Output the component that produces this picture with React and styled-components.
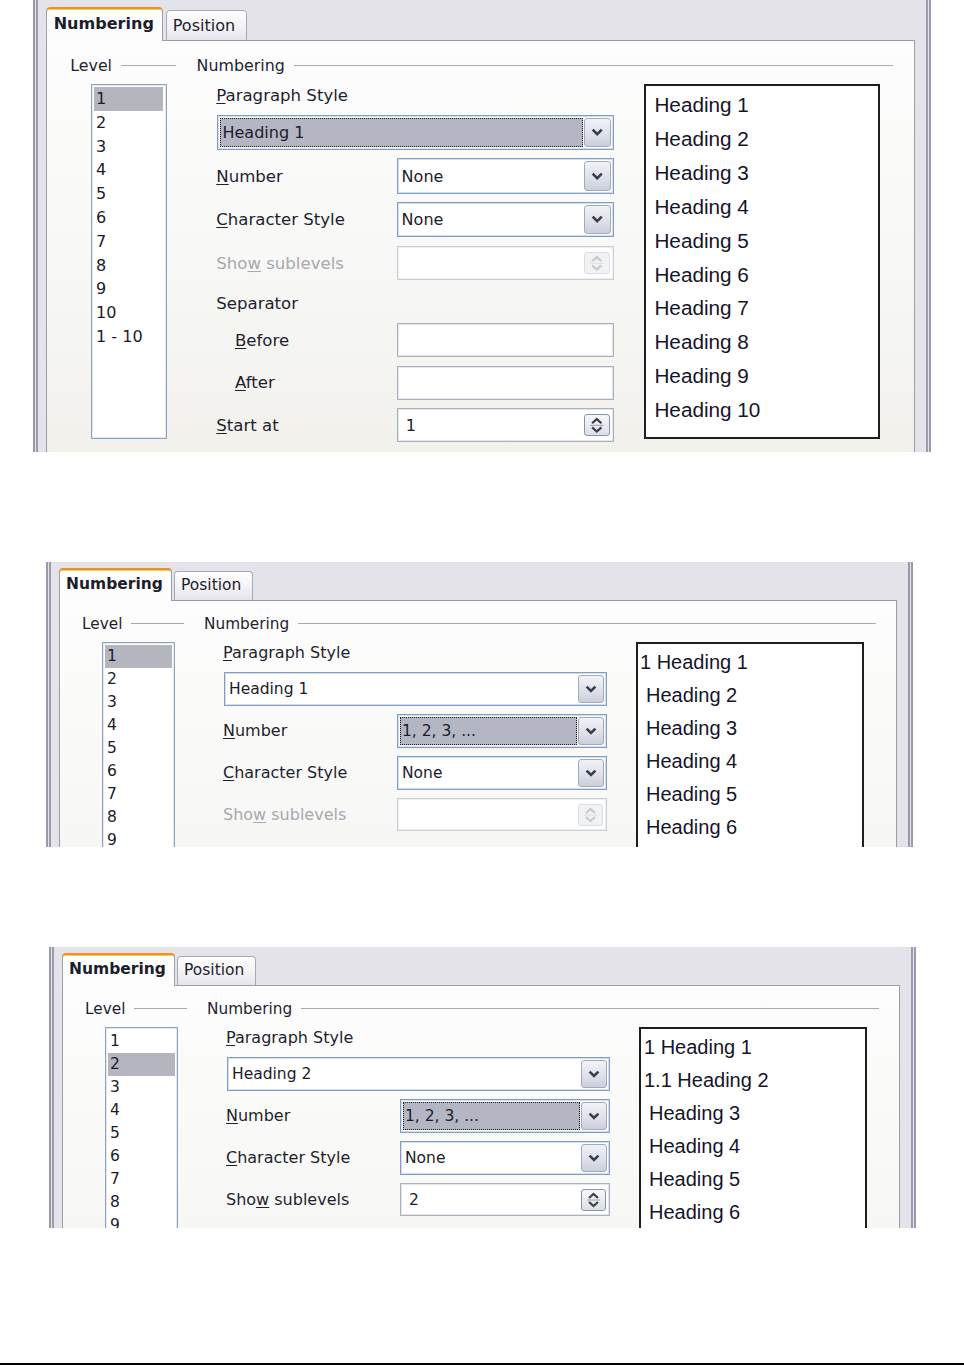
import React from 'react';
import styled, { createGlobalStyle } from 'styled-components';

const GlobalStyle = createGlobalStyle`
  html, body {
    margin: 0;
    padding: 0;
    background: #fff;
  }
  body {
    width: 964px;
    height: 1366px;
    overflow: hidden;
    font-family: "DejaVu Sans", "Liberation Sans", sans-serif;
  }
`;

const Sheet = styled.div`
  width: 964px;
  height: 1366px;
  display: flex;
  flex-direction: column;
`;

const Window = styled.div`
  flex: none;
  zoom: ${p => p.$zoom || 1};
  margin-left: ${p => p.$left}px;
  margin-top: ${p => p.$top}px;
  width: 867px;
  height: ${p => p.$height}px;
  box-sizing: border-box;
  border-left: 5px double #9a9aac;
  border-right: 5px double #9a9aac;
  background: #e3e3e9;
  padding: ${p => p.$padTop}px 0 0 8px;
  overflow: hidden;
`;

const TabStrip = styled.div`
  position: relative;
  z-index: 1;
  display: flex;
  align-items: flex-end;
  gap: 2px;
  height: 32px;
`;

const Tab = styled.div`
  box-sizing: border-box;
  width: ${p => p.$width}px;
  height: ${p => (p.$active ? 33 : 29)}px;
  margin-bottom: ${p => (p.$active ? -1 : 0)}px;
  padding: 0 0 ${p => (p.$active ? 3 : 1)}px 6px;
  display: flex;
  align-items: center;
  border: 1px solid ${p => (p.$active ? '#9aa2a6' : '#a3abba')};
  border-bottom: none;
  border-top: ${p => (p.$active ? '2px solid #e8912f' : '1px solid #a3abba')};
  border-radius: 4px 4px 0 0;
  box-shadow: ${p => (p.$active ? 'inset 0 1px 0 #ffc84a' : 'inset 0 1px 0 #fff')};
  background: ${p =>
    p.$active
      ? 'linear-gradient(#ffffff, #fcfcfc)'
      : 'linear-gradient(#fefefe, #f1f1f5 60%, #e4e4ec)'};
  font-size: 15.5px;
  font-weight: ${p => (p.$active ? 'bold' : 'normal')};
  color: #1d1d2c;
  white-space: nowrap;
`;

const TabPage = styled.div`
  width: 838px;
  min-height: 520px;
  box-sizing: border-box;
  border: 1px solid #979fa3;
  background: linear-gradient(#fdfdfd, #f8f8f6 200px, #f1f0eb 420px);
  padding-top: 13px;
`;

const LegendRow = styled.div`
  display: flex;
  align-items: center;
  height: 20px;
  padding: 0 20px 0 22px;
`;

const Legend = styled.div`
  display: flex;
  align-items: center;
  flex: ${p => (p.$grow ? 1 : 'none')};
  width: ${p => (p.$grow ? 'auto' : `${p.$width}px`)};
  margin-left: ${p => p.$gap || 0}px;
  font-size: 15.3px;
  color: #1f1f30;

  &::after {
    content: '';
    flex: 1;
    height: 1px;
    margin-left: 9px;
    background: #a9a9ad;
  }
`;

const Body = styled.div`
  display: flex;
  align-items: flex-start;
  margin-top: 8px;
  padding-left: 42px;
`;

const LevelList = styled.div`
  flex: none;
  width: 73px;
  height: 343px;
  box-sizing: border-box;
  border: 1px solid #8ea2bd;
  box-shadow: inset 0 0 0 1px #e4e9f0;
  background: #fff;
  padding: 2px;
`;

const LevelItem = styled.div`
  height: 23px;
  line-height: 23px;
  padding-left: 2px;
  font-size: 15.5px;
  color: #1c1c2a;
  background: ${p => (p.$selected ? '#b5b5c0' : 'transparent')};
`;

const Form = styled.div`
  flex: none;
  width: 384px;
  margin-left: 48px;
  display: flex;
  flex-direction: column;
  gap: 8px;
`;

const LabelLine = styled.div`
  height: 22px;
  margin-top: ${p => p.$lift || 0}px;
  display: flex;
  align-items: center;
`;

const Row = styled.div`
  display: grid;
  grid-template-columns: 174px 210px;
  align-items: center;
  height: ${p => p.$h || 34}px;
`;

const Label = styled.span`
  font-size: 16px;
  color: ${p => (p.$disabled ? '#a9a8ae' : '#1f1f2f')};
  padding-left: ${p => p.$indent || 0}px;
  white-space: nowrap;
`;

const Key = styled.span`
  text-decoration: underline;
  text-underline-offset: 2px;
`;

const tones = {
  blue: ['#819ec6', '#d4deeb'],
  grey: ['#a9b1bb', '#e3e6ea'],
  dim: ['#cbced3', '#eeeff1'],
};

const Field = styled.div`
  box-sizing: border-box;
  height: ${p => p.$h || 34}px;
  margin-left: ${p => p.$shift || 0}px;
  display: flex;
  align-items: stretch;
  border: 1px solid ${p => tones[p.$tone][0]};
  box-shadow: inset 0 0 0 1px ${p => tones[p.$tone][1]};
  background: #fff;
  padding: 2px;
`;

const FieldText = styled.div`
  flex: 1;
  min-width: 0;
  display: flex;
  align-items: center;
  box-sizing: border-box;
  margin-right: 1px;
  padding-left: ${p => (p.$focused ? 1 : p.$pad || 1)}px;
  font-size: 15.5px;
  color: #1c1c2a;
  white-space: nowrap;
  background: ${p => (p.$focused ? '#b4b6c3' : 'transparent')};
  border: 1px ${p => (p.$focused ? 'dotted #1a1a1a' : 'solid transparent')};
`;

const DropButton = styled.div`
  flex: none;
  width: 26px;
  box-sizing: border-box;
  display: flex;
  align-items: center;
  justify-content: center;
  border: 1px solid #a0a9c0;
  border-radius: 3px;
  background: linear-gradient(#f1f2f7, #dfe1ea 55%, #cbcfdc);
`;

const SpinButton = styled.div`
  flex: none;
  align-self: center;
  width: 25px;
  height: 22px;
  margin-right: 1px;
  box-sizing: border-box;
  display: flex;
  align-items: center;
  justify-content: center;
  border: 1px solid ${p => (p.$disabled ? '#dcdde2' : '#8892a8')};
  border-radius: 3px;
  background: ${p =>
    p.$disabled ? '#f1f2f3' : 'linear-gradient(#f7f8fb, #dcdfe8)'};
`;

const Preview = styled.div`
  flex: none;
  width: 228px;
  height: 343px;
  margin-left: 29px;
  box-sizing: border-box;
  border: 2px solid #1e1e1e;
  background: #fff;
  padding-top: 2px;
`;

const PreviewLine = styled.div`
  height: ${p => p.$lh}px;
  line-height: ${p => p.$lh}px;
  padding-left: ${p => p.$indent}px;
  font-family: "Liberation Sans", Arial, sans-serif;
  font-size: 20px;
  color: #15152a;
  white-space: nowrap;
`;

const Rule = styled.div`
  flex: none;
  margin-top: 135px;
  height: 2px;
  background: #000;
`;

const Chevron = () => (
  <svg width="12" height="8" viewBox="0 0 12 8">
    <polyline points="1.6,1.6 6,6 10.4,1.6" fill="none" stroke="#3a3d4a" strokeWidth="2.6" />
  </svg>
);

const Arrows = ({ disabled }) => {
  const c = disabled ? '#c9cacf' : '#3d404c';
  return (
    <svg width="15" height="18" viewBox="0 0 15 18">
      <polyline points="3,7 7.5,3 12,7" fill="none" stroke={c} strokeWidth="2.2" />
      <line x1="1" y1="9" x2="14" y2="9" stroke={disabled ? '#e0e0e4' : '#9aa2b4'} strokeWidth="1" />
      <polyline points="3,11 7.5,15 12,11" fill="none" stroke={c} strokeWidth="2.2" />
    </svg>
  );
};

const Combo = ({ value, focused, wide }) => (
  <Field $tone="blue" $shift={wide ? 1 : 0}>
    <FieldText $focused={focused}>{value}</FieldText>
    <DropButton>
      <Chevron />
    </DropButton>
  </Field>
);

const Spin = ({ value, disabled }) => (
  <Field $tone={disabled ? 'dim' : 'grey'} $h={33}>
    <FieldText $pad={5}>{value}</FieldText>
    <SpinButton $disabled={disabled}>
      <Arrows disabled={disabled} />
    </SpinButton>
  </Field>
);

const TextBox = () => (
  <Field $tone="grey" $h={33}>
    <FieldText />
  </Field>
);

const levels = ['1', '2', '3', '4', '5', '6', '7', '8', '9', '10', '1 - 10'];

const Dialog = ({ cfg }) => (
  <Window $zoom={cfg.zoom} $left={cfg.left} $top={cfg.top} $height={cfg.height} $padTop={cfg.padTop}>
    <TabStrip>
      <Tab $active $width={113}>Numbering</Tab>
      <Tab $width={79}>Position</Tab>
    </TabStrip>
    <TabPage>
      <LegendRow>
        <Legend $width={102}>Level</Legend>
        <Legend $grow $gap={20}>Numbering</Legend>
      </LegendRow>
      <Body>
        <LevelList>
          {levels.map((l, i) => (
            <LevelItem key={l} $selected={i === cfg.level}>{l}</LevelItem>
          ))}
        </LevelList>
        <Form>
          <LabelLine>
            <Label><Key>P</Key>aragraph Style</Label>
          </LabelLine>
          <Combo wide value={cfg.paraStyle} focused={cfg.focus === 'para'} />
          <Row>
            <Label><Key>N</Key>umber</Label>
            <Combo value={cfg.number} focused={cfg.focus === 'number'} />
          </Row>
          <Row>
            <Label><Key>C</Key>haracter Style</Label>
            <Combo value="None" />
          </Row>
          <Row>
            <Label $disabled={!cfg.sublevels}>Sho<Key>w</Key> sublevels</Label>
            <Spin value={cfg.sublevels} disabled={!cfg.sublevels} />
          </Row>
          {cfg.separator && (
            <>
              <LabelLine $lift={3}>
                <Label>Separator</Label>
              </LabelLine>
              <Row $h={33}>
                <Label $indent={18}><Key>B</Key>efore</Label>
                <TextBox />
              </Row>
              <Row $h={33}>
                <Label $indent={18}><Key>A</Key>fter</Label>
                <TextBox />
              </Row>
              <Row $h={33}>
                <Label><Key>S</Key>tart at</Label>
                <Spin value="1" />
              </Row>
            </>
          )}
        </Form>
        <Preview>
          {cfg.preview.map(([text, indent]) => (
            <PreviewLine key={text} $indent={indent} $lh={cfg.lineHeight}>{text}</PreviewLine>
          ))}
        </Preview>
      </Body>
    </TabPage>
  </Window>
);

const plain = n => [`Heading ${n}`, 8];

const dialogs = [
  {
    zoom: 1.036, left: 32, top: 0, height: 436, padTop: 7, lineHeight: 32.75,
    level: 0, paraStyle: 'Heading 1', focus: 'para', number: 'None', sublevels: '', separator: true,
    preview: [1, 2, 3, 4, 5, 6, 7, 8, 9, 10].map(plain),
  },
  {
    left: 46, top: 110, height: 285, padTop: 6, lineHeight: 33,
    level: 0, paraStyle: 'Heading 1', focus: 'number', number: '1, 2, 3, ...', sublevels: '',
    preview: [['1 Heading 1', 2], ...[2, 3, 4, 5, 6, 7].map(plain)],
  },
  {
    left: 49, top: 100, height: 281, padTop: 6, lineHeight: 33,
    level: 1, paraStyle: 'Heading 2', focus: 'number', number: '1, 2, 3, ...', sublevels: '2',
    preview: [['1 Heading 1', 3], ['1.1 Heading 2', 3], ...[3, 4, 5, 6, 7].map(plain)],
  },
];

const App = () => (
  <>
    <GlobalStyle />
    <Sheet>
      {dialogs.map((d, i) => (
        <Dialog key={i} cfg={d} />
      ))}
      <Rule />
    </Sheet>
  </>
);

export default App;
